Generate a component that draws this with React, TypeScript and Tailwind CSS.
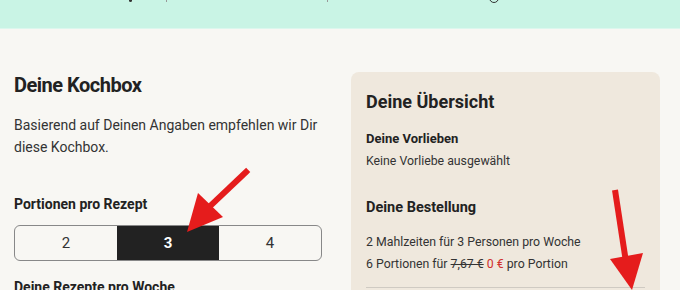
import React from "react";

export default function App() {
  return (
    <div
      className="relative w-[680px] h-[290px] overflow-hidden bg-[#f8f7f3] text-[#222]"
      style={{ fontFamily: "Roboto, 'Noto Sans', sans-serif" }}
    >
      {/* header */}
      <div className="relative h-[29px] bg-[#c9f4e5] border-b border-[#dcf7ee]">
        <span className="absolute left-[129px] top-[-1px] w-[3px] h-[3px] rounded-full bg-[#333]" />
        <span className="absolute left-[166px] top-0 w-[1px] h-[2px] bg-[#999]" />
        <span className="absolute left-[327px] top-0 w-[1px] h-[2px] bg-[#999]" />
        <span className="absolute left-[489px] top-[-7px] w-[10px] h-[10px] rounded-full border-[1.5px] border-[#333]" />
      </div>

      <div className="flex pl-[14px] pt-[42px]">
        {/* left column */}
        <div className="w-[308px] flex flex-col">
          <h1 className="text-[20px] leading-[28px] font-bold tracking-[-0.5px] text-[#222]">
            Deine Kochbox
          </h1>
          <p className="mt-[15px] text-[14px] leading-[22px] text-[#333]">
            Basierend auf Deinen Angaben empfehlen wir Dir diese Kochbox.
          </p>
          <h2 className="mt-[36px] text-[14px] leading-[20px] font-bold text-[#222]">
            Portionen pro Rezept
          </h2>
          <div className="mt-[11px] flex h-[36px] rounded-[6px] border border-[#888] overflow-hidden text-[15px]">
            <div className="flex-1 flex items-center justify-center text-[#333]">2</div>
            <div className="flex-1 flex items-center justify-center bg-[#222] text-white font-bold">3</div>
            <div className="flex-1 flex items-center justify-center text-[#333]">4</div>
          </div>
          <h2 className="mt-[16px] text-[14px] leading-[20px] font-bold text-[#222]">
            Deine Rezepte pro Woche
          </h2>
        </div>

        {/* right panel */}
        <div className="ml-[29px] mt-[1px] w-[309px] h-[260px] rounded-[8px] bg-[#efe8dd] px-[15px] pt-[18px]">
          <h2 className="text-[18px] leading-[24px] font-bold text-[#222]">Deine Übersicht</h2>
          <div className="mt-[17px] text-[13px] leading-[16px] font-bold text-[#222]">Deine Vorlieben</div>
          <div className="mt-[5px] text-[12.3px] leading-[18px] text-[#333]">Keine Vorliebe ausgewählt</div>
          <div className="mt-[28px] text-[14.5px] leading-[20px] font-bold text-[#222]">Deine Bestellung</div>
          <div className="mt-[13px] text-[12.3px] leading-[22px] text-[#333]">
            2 Mahlzeiten für 3 Personen pro Woche
          </div>
          <div className="text-[12.3px] leading-[22px] text-[#333]">
            6 Portionen für <span className="line-through">7,67 €</span>{" "}
            <span className="text-[#d0312d]">0 €</span> pro Portion
          </div>
          <div className="mt-[12px] h-px bg-[#cfcac2]" />
        </div>
      </div>

      {/* annotation arrows */}
      <svg className="absolute inset-0 pointer-events-none" width="680" height="290">
        <line x1="246" y1="172" x2="208" y2="208" stroke="#e51c1c" strokeWidth="6" strokeLinecap="square" />
        <polygon points="187,232 198,193 223,217" fill="#e51c1c" />
        <line x1="615" y1="190" x2="626" y2="262" stroke="#e51c1c" strokeWidth="6" />
        <polygon points="632,290 610,259 643,253" fill="#e51c1c" />
      </svg>
    </div>
  );
}
